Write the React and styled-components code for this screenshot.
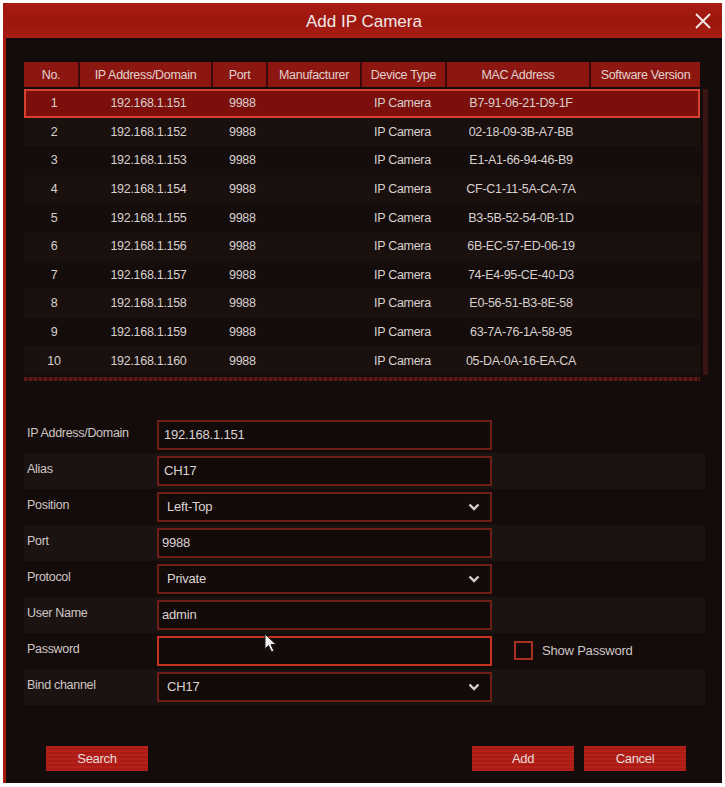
import React, { useState } from 'react';
import styled, { createGlobalStyle } from 'styled-components';

const GlobalStyle = createGlobalStyle`
  html, body {
    margin: 0;
    background: #ffffff;
  }
  body {
    font-family: "Liberation Sans", Arial, sans-serif;
  }
`;

const Frame = styled.div`
  position: relative;
  margin: 3px;
  width: 719px;
  height: 780px;
  display: flex;
  flex-direction: column;
  background: #130c0b;
  border-left: 3px solid #a3190f;
  box-sizing: border-box;
`;

const TitleBar = styled.div`
  height: 35px;
  flex-shrink: 0;
  display: flex;
  align-items: center;
  justify-content: center;
  position: relative;
  padding-top: 2px;
  box-sizing: border-box;
  background: linear-gradient(180deg, #a81c13 0%, #9c170f 55%, #a91d14 100%);
  color: #f1e6e4;
  font-size: 17px;
`;

const CloseButton = styled.div`
  position: absolute;
  right: 10px;
  top: 9px;
  width: 18px;
  height: 18px;
`;

const Body = styled.div`
  flex: 1;
  display: flex;
  flex-direction: column;
  padding: 24px 14px 0 18px;
`;

const TableWrap = styled.div`
  display: flex;
  gap: 3px;
`;

const Table = styled.div`
  width: 676px;
  display: flex;
  flex-direction: column;
`;

const cols = '56px 133px 55px 94px 85px 144px 109px';

const HeaderRow = styled.div`
  display: grid;
  grid-template-columns: ${cols};
  height: 25px;
  margin-bottom: 2px;
`;

const HeaderCell = styled.div`
  display: flex;
  align-items: center;
  justify-content: center;
  background: #8c1711;
  border-right: 2px solid #3a0c09;
  color: #e2d2cf;
  font-size: 12.5px;
  letter-spacing: -0.3px;
  white-space: nowrap;
  overflow: hidden;

  &:last-child {
    border-right: none;
  }
`;

const Row = styled.div`
  display: grid;
  grid-template-columns: ${cols};
  height: 28.6px;
  box-sizing: border-box;
  background: ${(p) => (p.$selected ? '#7c0f0b' : p.$alt ? '#1a110f' : '#140d0c')};
  border: ${(p) => (p.$selected ? '2px solid #d9412f' : '2px solid transparent')};
  color: #d8d0ce;
  font-size: 12.5px;
  letter-spacing: -0.3px;
`;

const Cell = styled.div`
  display: flex;
  align-items: center;
  justify-content: ${(p) => p.$align || 'center'};
  padding-left: ${(p) => p.$pad || 0}px;
  white-space: nowrap;
`;

const ScrollTrack = styled.div`
  width: 5px;
  margin-top: 27px;
  height: 286px;
  background: #3a1410;
`;

const HScroll = styled.div`
  margin-top: 2px;
  width: 676px;
  height: 4px;
  background: repeating-linear-gradient(90deg, #5a1a14 0 3px, #3c110d 3px 5px);
`;

const Form = styled.div`
  margin-top: 36px;
  display: flex;
  flex-direction: column;
`;

const FormRow = styled.div`
  height: 36px;
  width: 681px;
  display: flex;
  align-items: center;
  background: ${(p) => (p.$alt ? '#1b1311' : 'transparent')};
`;

const Label = styled.div`
  width: 133px;
  padding-left: 3px;
  box-sizing: border-box;
  color: #cfc6c4;
  font-size: 12.5px;
  letter-spacing: -0.3px;
  margin-top: -4px;
`;

const Field = styled.div`
  width: 335px;
  height: 30px;
  box-sizing: border-box;
  display: flex;
  align-items: center;
  justify-content: space-between;
  padding: 0 10px 0 ${(p) => p.$pad || 5}px;
  background: #120b0a;
  border: ${(p) => (p.$focus ? '2px solid #c8301f' : '2px solid #6e1e17')};
  color: #ddd4d2;
  font-size: 13px;
  letter-spacing: -0.2px;
`;

const CheckWrap = styled.label`
  display: flex;
  align-items: center;
  gap: 9px;
  margin-left: 22px;
  color: #cfc6c4;
  font-size: 13px;
  letter-spacing: -0.2px;
  cursor: pointer;
`;

const CheckBox = styled.span`
  width: 15px;
  height: 15px;
  border: 2px solid #a8301f;
  display: inline-block;
  background: ${(p) => (p.$on ? '#a8301f' : 'transparent')};
`;

const ButtonBar = styled.div`
  margin-top: auto;
  margin-bottom: 12px;
  display: flex;
  align-items: center;
  padding-left: 22px;
  padding-right: 22px;
`;

const Button = styled.button`
  width: 102px;
  height: 25px;
  border: none;
  background: repeating-linear-gradient(180deg, #b5211a 0 2px, #a81c15 2px 4px);
  color: #eadcd9;
  font-family: "Liberation Sans", Arial, sans-serif;
  font-size: 13px;
  letter-spacing: -0.3px;
  margin-left: ${(p) => p.$gap || 0}px;
  cursor: pointer;
`;

const Spacer = styled.div`
  flex: 1;
`;

// mouse pointer drawn over the password field
const Pointer = styled.svg`
  position: absolute;
  left: 258px;
  top: 630px;
`;

const Chevron = () => (
  <svg width="12" height="8" viewBox="0 0 12 8">
    <polyline points="1.5,1.5 6,6 10.5,1.5" fill="none" stroke="#d8d0ce" strokeWidth="2.4" />
  </svg>
);

const cameras = [
  ['192.168.1.151', 'B7-91-06-21-D9-1F'],
  ['192.168.1.152', '02-18-09-3B-A7-BB'],
  ['192.168.1.153', 'E1-A1-66-94-46-B9'],
  ['192.168.1.154', 'CF-C1-11-5A-CA-7A'],
  ['192.168.1.155', 'B3-5B-52-54-0B-1D'],
  ['192.168.1.156', '6B-EC-57-ED-06-19'],
  ['192.168.1.157', '74-E4-95-CE-40-D3'],
  ['192.168.1.158', 'E0-56-51-B3-8E-58'],
  ['192.168.1.159', '63-7A-76-1A-58-95'],
  ['192.168.1.160', '05-DA-0A-16-EA-CA'],
];

const headers = ['No.', 'IP Address/Domain', 'Port', 'Manufacturer', 'Device Type', 'MAC Address', 'Software Version'];

export default function App() {
  const [selected, setSelected] = useState(0);
  const [showPwd, setShowPwd] = useState(false);

  return (
    <>
      <GlobalStyle />
      <Frame>
        <TitleBar>
          Add IP Camera
          <CloseButton>
            <svg width="18" height="18" viewBox="0 0 18 18">
              <path d="M2 2 L16 16 M16 2 L2 16" stroke="#f0e4e2" strokeWidth="2" />
            </svg>
          </CloseButton>
        </TitleBar>
        <Body>
          <TableWrap>
            <Table>
              <HeaderRow>
                {headers.map((h) => (
                  <HeaderCell key={h}>{h}</HeaderCell>
                ))}
              </HeaderRow>
              {cameras.map(([ip, mac], i) => (
                <Row key={ip} $selected={i === selected} $alt={i % 2 === 1} onClick={() => setSelected(i)}>
                  <Cell>{i + 1}</Cell>
                  <Cell>{ip}</Cell>
                  <Cell $align="flex-start" $pad={14}>9988</Cell>
                  <Cell />
                  <Cell $align="flex-start" $pad={10}>IP Camera</Cell>
                  <Cell>{mac}</Cell>
                  <Cell />
                </Row>
              ))}
              <HScroll />
            </Table>
            <ScrollTrack />
          </TableWrap>

          <Form>
            <FormRow>
              <Label>IP Address/Domain</Label>
              <Field>{cameras[selected][0]}</Field>
            </FormRow>
            <FormRow $alt>
              <Label>Alias</Label>
              <Field>CH17</Field>
            </FormRow>
            <FormRow>
              <Label>Position</Label>
              <Field $pad={8}>Left-Top<Chevron /></Field>
            </FormRow>
            <FormRow $alt>
              <Label>Port</Label>
              <Field $pad={3}>9988</Field>
            </FormRow>
            <FormRow>
              <Label>Protocol</Label>
              <Field $pad={8}>Private<Chevron /></Field>
            </FormRow>
            <FormRow $alt>
              <Label>User Name</Label>
              <Field $pad={3}>admin</Field>
            </FormRow>
            <FormRow>
              <Label>Password</Label>
              <Field $focus />
              <CheckWrap onClick={() => setShowPwd(!showPwd)}>
                <CheckBox $on={showPwd} />
                Show Password
              </CheckWrap>
            </FormRow>
            <FormRow $alt>
              <Label>Bind channel</Label>
              <Field $pad={8}>CH17<Chevron /></Field>
            </FormRow>
          </Form>

          <ButtonBar>
            <Button>Search</Button>
            <Spacer />
            <Button>Add</Button>
            <Button $gap={10}>Cancel</Button>
          </ButtonBar>
        </Body>
        <Pointer width="14" height="21" viewBox="0 0 14 21">
          <path d="M1 1 L1 16 L4.5 12.5 L7.5 19 L10 18 L7 11.5 L12 11.5 Z" fill="#f4f0ef" stroke="#1a1a1a" strokeWidth="1" />
        </Pointer>
      </Frame>
    </>
  );
}
